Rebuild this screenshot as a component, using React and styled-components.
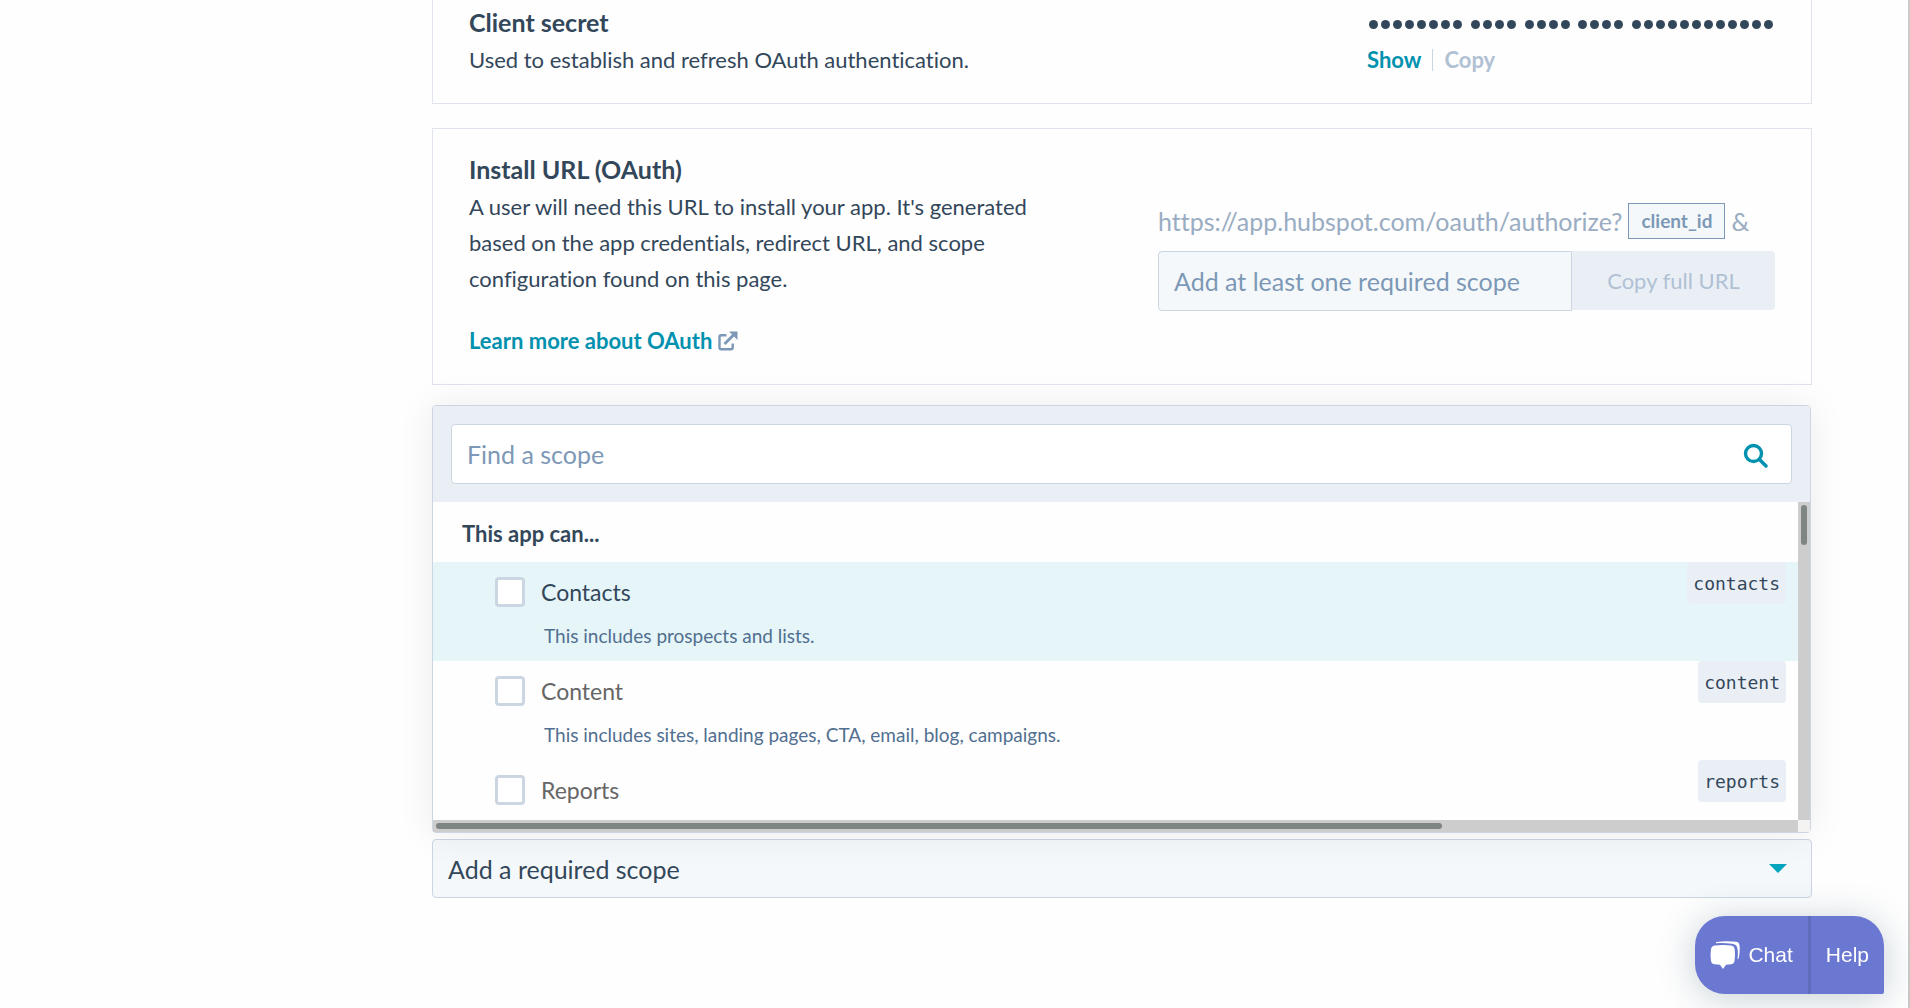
import React from "react";
import styled, { createGlobalStyle } from "styled-components";

const GlobalStyle = createGlobalStyle`
  *, *::before, *::after {
    box-sizing: border-box;
  }
  body {
    margin: 0;
    background: #fefefe;
    color: #33475b;
    font-family: Lato, "Liberation Sans", sans-serif;
    font-size: 22px;
    line-height: 36px;
    font-variant-ligatures: none;
  }
  button, input, select {
    font-family: inherit;
    font-size: inherit;
    color: inherit;
  }
`;

const Page = styled.div`
  min-height: 100vh;
  overflow: hidden;
  padding: 0 96px 48px 432px;
  border-right: 2px solid #cbcac8;
`;
const Card = styled.section`
  display: flex;
  justify-content: space-between;
  gap: 32px;
  padding: ${({ $top }) => ($top ? "4px 36px 25px" : "22px 36px 25px")};
  margin-bottom: 24px;
  border: 1px solid #dfe3eb;
  border-top-width: ${({ $top }) => ($top ? "0" : "1px")};
  background: #fefefe;
`;
const Info = styled.div`
  max-width: 570px;
`;
const Title = styled.h4`
  margin: 0 0 2px;
  font-size: 25px;
  font-weight: 700;
  line-height: 36px;
`;
const Text = styled.p`
  margin: 0;
`;
const DocsLink = styled.a`
  display: inline-flex;
  align-items: center;
  gap: 6px;
  margin-top: 26px;
  color: #0091ae;
  font-weight: 700;
  text-decoration: none;
`;
const Secret = styled.div`
  width: 408px;
`;
const Dots = styled.div`
  display: flex;
  justify-content: space-between;
  align-items: center;
  height: 38px;
  padding: 2px 2px 0;
`;
const DotGroup = styled.span`
  display: flex;
  gap: 3px;
`;
const Dot = styled.i`
  width: 9px;
  height: 9px;
  border-radius: 50%;
  background: #33475b;
`;
const Actions = styled.div`
  display: flex;
  align-items: center;
`;
const TextButton = styled.button`
  padding: 0;
  border: 0;
  background: none;
  color: ${({ disabled }) => (disabled ? "#b0c1d4" : "#0091ae")};
  font-weight: 700;
  line-height: 36px;
`;
const Divider = styled.span`
  width: 1px;
  height: 22px;
  margin: 0 11px;
  background: #cbd6e2;
`;
const Install = styled.div`
  width: 617px;
  padding-top: 52px;
`;
const Url = styled.div`
  display: flex;
  align-items: center;
  gap: 6px;
  margin-bottom: 12px;
  color: #99acc2;
  font-size: 25px;
`;
const UrlParam = styled.span`
  padding: 0 12px;
  border: 1px solid #7c98b6;
  background: #f5f8fa;
  color: #7c98b6;
  font-size: 19px;
  font-weight: 700;
  line-height: 34px;
`;
const CopyGroup = styled.div`
  display: flex;
`;
const ScopeInput = styled.input`
  flex: 1;
  min-width: 0;
  height: 60px;
  padding: 0 15px;
  border: 1px solid #cbd6e2;
  border-radius: 4px 0 0 4px;
  background: #f5f8fa;
  font-size: 25px;

  &::placeholder {
    color: #7c98b6;
  }
`;
const CopyButton = styled.button`
  width: 203px;
  height: 59px;
  padding: 0;
  border: 0;
  border-radius: 0 4px 4px 0;
  background: #eaeff6;
  color: #b0c1d4;
`;
const Dropdown = styled.div`
  position: relative;
  margin: -4px 1px 6px 0;
  border: 1px solid #cbd6e2;
  border-radius: 4px;
  background: #fefefe;
  box-shadow: 0 1px 36px rgba(0, 0, 0, 0.08);
`;
const SearchBar = styled.div`
  padding: 18px;
  border-radius: 3px 3px 0 0;
  background: #eaeff6;
`;
const SearchField = styled.label`
  display: flex;
  align-items: center;
  height: 60px;
  padding: 0 22px 0 15px;
  border: 1px solid #cbd6e2;
  border-radius: 4px;
  background: #fff;
`;
const SearchInput = styled.input`
  flex: 1;
  border: 0;
  outline: 0;
  background: none;
  padding: 0;
  font-size: 25px;

  &::placeholder {
    color: #7c98b6;
  }
`;
const ListGrid = styled.div`
  display: grid;
  grid-template-columns: 1fr 12px;
  grid-template-rows: 318px 12px;
`;
const List = styled.div`
  overflow: hidden;
`;
const ListTitle = styled.div`
  padding: 14px 29px 10px;
  font-weight: 700;
`;
const Row = styled.div`
  display: flex;
  justify-content: space-between;
  align-items: flex-start;
  height: 99px;
  padding: 0 12px 0 62px;
  background: ${({ $active }) => ($active ? "#e5f5f8" : "transparent")};
`;
const Option = styled.label`
  display: flex;
  align-items: center;
  gap: 16px;
  height: 60px;
  color: ${({ $active }) => ($active ? "#33475b" : "#666")};
  font-size: 23px;
`;
const Check = styled.input`
  appearance: none;
  width: 30px;
  height: 30px;
  margin: 0;
  border: 3px solid #cbd6e2;
  border-radius: 4px;
  background: #fff;
`;
const Hint = styled.div`
  padding-left: 49px;
  color: #516f90;
  font-size: 19px;
  line-height: 28px;
`;
const ScopeTag = styled.code`
  padding: 2px 6px 0;
  border-radius: 4px;
  background: #eaeff6;
  font-family: "DejaVu Sans Mono", monospace;
  font-size: 18px;
  line-height: 40px;
`;
const Track = styled.div`
  padding: 3px;
  background: #cdcdcd;
`;
const Thumb = styled.div`
  width: ${({ $width }) => $width};
  height: ${({ $height }) => $height};
  border-radius: 3px;
  background: #7f8583;
`;
const Corner = styled.div`
  background: #f4f3f1;
`;
const Picker = styled.button`
  display: flex;
  justify-content: space-between;
  align-items: center;
  width: 100%;
  height: 59px;
  padding: 0 24px 0 15px;
  border: 1px solid #cbd6e2;
  border-radius: 4px;
  background: #f5f8fa;
  font-size: 25px;
`;
const Widget = styled.div`
  position: fixed;
  right: 26px;
  bottom: 14px;
  display: flex;
  height: 78px;
  border-radius: 30px 30px 2px 30px;
  overflow: hidden;
  background: #6a78d1;
  box-shadow: 0 4px 36px rgba(30, 70, 90, 0.25);
`;
const WidgetButton = styled.button`
  display: flex;
  align-items: center;
  gap: 8px;
  padding: 0 15px;
  border: 0;
  border-left: ${({ $divided }) => ($divided ? "3px solid #5f6cbc" : "0")};
  background: none;
  color: #fff;
  font-family: "Liberation Sans", Arial, sans-serif;
  font-size: 21px;
`;

const ExternalIcon = () => (
  <svg width="20" height="20" viewBox="0 0 20 20" fill="none" stroke="#7c98b6">
    <path
      d="M8.500 4.200H3.200Q1.500 4.200 1.500 6V16.500Q1.500 18.300 3.200 18.300H13Q14.700 18.300 14.700 16.500V12.500"
      strokeWidth="2.400"
    />
    <path d="M6.500 13 16 3.500" strokeWidth="2.800" />
    <path d="M11 .5h8.500V9z" fill="#7c98b6" stroke="none" />
  </svg>
);

// extra room above the glass, it hangs a little below the text's middle
const SearchIcon = () => (
  <svg width="26" height="30" viewBox="0 -4 26 30" fill="none" stroke="#0091ae">
    <circle cx="10.5" cy="10.5" r="8" strokeWidth="3.4" />
    <path d="M16.5 16.5 23 23" strokeWidth="3.6" strokeLinecap="round" />
  </svg>
);

const ChatIcon = () => (
  <svg width="30" height="28" viewBox="0 0 30 28" fill="#fff">
    <path d="M4.500 4.500Q13 3.500 21.500 4.500Q24.300 5 24.700 8Q25.400 14 24.500 20Q24 23 21 23.300L16 23.800L13 28L10 23.800L4.500 23.300Q1.500 23 1 20Q0 14 1 8Q1.500 5 4.500 4.500Z" />
    <path d="M6 1Q16-.5 26 .7Q29 1 29.500 4Q30.200 10 28.800 17Q28.500 18 27.500 18Q28.500 10 27 6Q26 3.300 22 2.700Q14 1.700 6 2.200Z" />
  </svg>
);

const secretGroups = [8, 4, 4, 4, 12];

const scopes = [
  { name: "Contacts", scope: "contacts", hint: "This includes prospects and lists." },
  {
    name: "Content",
    scope: "content",
    hint: "This includes sites, landing pages, CTA, email, blog, campaigns.",
  },
  { name: "Reports", scope: "reports", hint: "" },
];

const ScopeRow = ({ item, active }) => {
  const { name, scope, hint } = item;

  return (
    <Row $active={active}>
      <div>
        <Option $active={active}>
          <Check type="checkbox" />
          {name}
        </Option>
        <Hint>{hint}</Hint>
      </div>
      <ScopeTag>{scope}</ScopeTag>
    </Row>
  );
};

const App = () => {
  return (
    <>
      <GlobalStyle />
      <Page>
        <Card $top>
          <Info>
            <Title>Client secret</Title>
            <Text>Used to establish and refresh OAuth authentication.</Text>
          </Info>
          <Secret>
            <Dots>
              {secretGroups.map((count, i) => (
                <DotGroup key={i}>
                  {Array.from({ length: count }, (_, n) => (
                    <Dot key={n} />
                  ))}
                </DotGroup>
              ))}
            </Dots>
            <Actions>
              <TextButton>Show</TextButton>
              <Divider />
              <TextButton disabled>Copy</TextButton>
            </Actions>
          </Secret>
        </Card>
        <Card>
          <Info>
            <Title>Install URL (OAuth)</Title>
            <Text>
              A user will need this URL to install your app. It's generated based on the app
              credentials, redirect URL, and scope configuration found on this page.
            </Text>
            <DocsLink href="#oauth">
              Learn more about OAuth
              <ExternalIcon />
            </DocsLink>
          </Info>
          <Install>
            <Url>
              <span>https://app.hubspot.com/oauth/authorize?</span>
              <UrlParam>client_id</UrlParam>
              <span>&amp;</span>
            </Url>
            <CopyGroup>
              <ScopeInput
                aria-label="Install URL scope"
                placeholder="Add at least one required scope"
                readOnly
              />
              <CopyButton disabled>Copy full URL</CopyButton>
            </CopyGroup>
          </Install>
        </Card>
        <Dropdown>
          <SearchBar>
            <SearchField>
              <SearchInput aria-label="Find a scope" placeholder="Find a scope" />
              <SearchIcon />
            </SearchField>
          </SearchBar>
          <ListGrid>
            <List>
              <ListTitle>This app can...</ListTitle>
              {scopes.map((item, i) => (
                <ScopeRow key={item.scope} item={item} active={i === 0} />
              ))}
            </List>
            <Track>
              <Thumb $width="6px" $height="40px" />
            </Track>
            <Track>
              <Thumb $width="74%" $height="6px" />
            </Track>
            <Corner />
          </ListGrid>
        </Dropdown>
        <Picker aria-haspopup="listbox" aria-expanded="true">
          Add a required scope
          <svg width="18" height="9" viewBox="0 0 18 9" fill="#00a4bd">
            <path d="M0 0h18L9 9z" />
          </svg>
        </Picker>
      </Page>
      <Widget>
        <WidgetButton>
          <ChatIcon />
          Chat
        </WidgetButton>
        <WidgetButton $divided>Help</WidgetButton>
      </Widget>
    </>
  );
};

export default App;
